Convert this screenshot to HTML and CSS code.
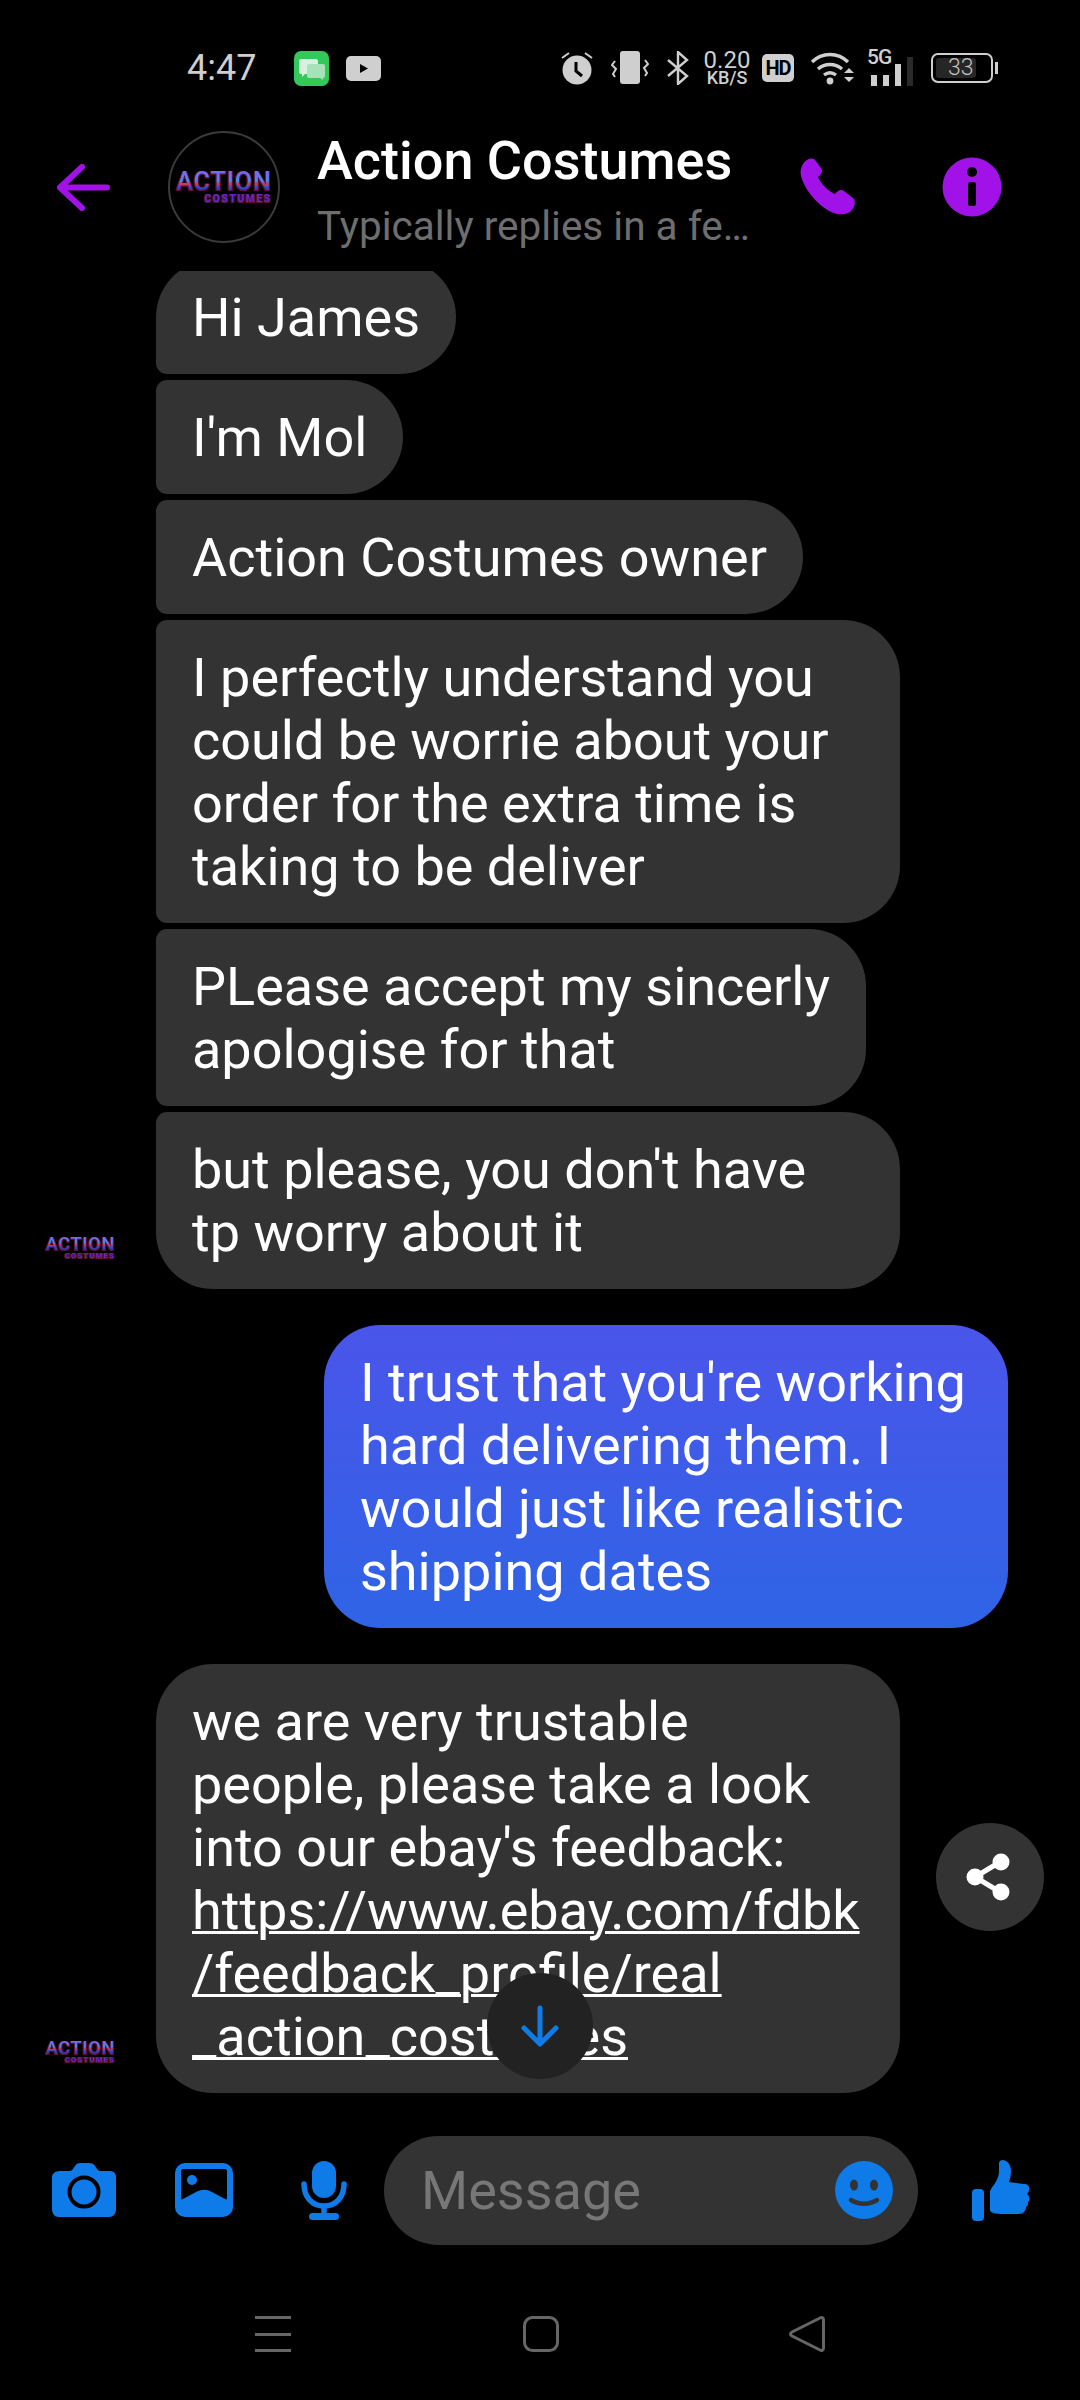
FILE: index.html
```html
<!DOCTYPE html>
<html lang="en">
<head>
<meta charset="UTF-8">
<meta name="viewport" content="width=device-width, initial-scale=1.0">
<title>Action Costumes</title>
<link rel="stylesheet" href="styles.css">
</head>
<body>

<div class="status-bar">
    <span class="clock">4:47</span>
    <svg class="app-icon" width="35" height="35" viewBox="0 0 35 35">
        <rect width="35" height="35" rx="7" fill="#34c759"/>
        <path d="M8 8h14a2 2 0 0 1 2 2v11a2 2 0 0 1-2 2H11l-3 3v-3H7a2 2 0 0 1-2-2V10a2 2 0 0 1 2-2z" fill="#d6f2de"/>
        <path d="M15 13h14a2 2 0 0 1 2 2v10a2 2 0 0 1-2 2v2l-3-2H15a2 2 0 0 1-2-2V15a2 2 0 0 1 2-2z" fill="#a8e2b8"/>
    </svg>
    <svg class="app-icon" width="35" height="25" viewBox="0 0 35 25">
        <rect width="35" height="25" rx="5" fill="#cfcfcf"/>
        <path d="M14 8l8 4.500-8 4.500z" fill="#000"/>
    </svg>

    <div class="status-right">
        <svg class="i-alarm" width="32" height="34" viewBox="0 0 32 34">
            <circle cx="16" cy="19" r="14.500" fill="#cfcfcf"/>
            <path d="M15 11v9l6 5" fill="none" stroke="#000" stroke-width="3"/>
            <path d="M1 7l7-5M31 7l-7-5" stroke="#cfcfcf" stroke-width="2"/>
        </svg>
        <svg class="i-vibrate" width="38" height="34" viewBox="0 0 38 34">
            <rect x="9" width="20" height="33" rx="3" fill="#cfcfcf"/>
            <path d="M4 10L1 14l4 4-3 5 2 3M34 9l3 4-4 4 3 5-2 3" fill="none" stroke="#cfcfcf" stroke-width="2"/>
        </svg>
        <svg class="i-bt" width="22" height="34" viewBox="0 0 22 34">
            <path d="M1 9l19 16-9 8V1l9 8L1 25" fill="none" stroke="#cfcfcf" stroke-width="2.400"/>
        </svg>
        <div class="speed"><span class="speed-num">0.20</span><span class="speed-unit">KB/S</span></div>
        <span class="hd">HD</span>
        <svg class="i-wifi" width="46" height="36" viewBox="0 0 46 36">
            <path d="M2 12c10-10 26-10 36 0M8 19c7-6 17-6 24 0M14 25c4-3 8-3 12 0" fill="none" stroke="#cfcfcf" stroke-width="3.400"/>
            <circle cx="20" cy="31" r="3.400" fill="#cfcfcf"/>
            <path d="M34 23l5-5 5 5zM34 27l5 5 5-5z" fill="#cfcfcf"/>
        </svg>
        <div class="signal">
            <span class="five-g">5G</span>
            <i class="bar b1"></i><i class="bar b2"></i><i class="bar b3"></i><i class="bar b4"></i>
        </div>
        <div class="battery"><span class="battery-fill">33</span></div>
        <i class="battery-nub"></i>
    </div>
</div>

<div class="header">
    <svg class="back" width="53" height="47" viewBox="0 0 53 47">
        <path d="M25 3L3 23.500l22 20.500M3 23.500h47" fill="none" stroke="#a112e8" stroke-width="6" stroke-linecap="round" stroke-linejoin="round"/>
    </svg>
    <div class="avatar-big">
        <div class="logo logo-big"><b>ACTION</b><em>COSTUMES</em></div>
    </div>
    <div class="header-text">
        <div class="name">Action Costumes</div>
        <div class="sub">Typically replies in a fe…</div>
    </div>
    <svg class="phone" width="58" height="58" viewBox="0 0 58 58">
        <path d="M3 6c3-5 9-7 12-4l6 8c2 3 1 6-3 9 3 7 10 14 17 17 3-4 6-5 9-3l9 7c3 3 2 8-1 12-3 4-9 5-15 4C22 52 5 34 1 18 0 13 1 9 3 6z" fill="#a112e8"/>
    </svg>
    <svg class="info" width="60" height="60" viewBox="0 0 60 60">
        <circle cx="30" cy="30" r="29.500" fill="#a112e8"/>
        <circle cx="30" cy="15" r="5" fill="#000"/>
        <rect x="26" y="25" width="8" height="24" rx="2.500" fill="#000"/>
    </svg>
</div>

<div class="thread">
    <div class="group">
        <div class="side"></div>
        <div class="bubbles">
            <div class="bubble first">Hi James</div>
            <div class="bubble">I'm Mol</div>
            <div class="bubble">Action Costumes owner</div>
            <div class="bubble wide">I perfectly understand you<br>could be worrie about your<br>order for the extra time is<br>taking to be deliver</div>
            <div class="bubble">PLease accept my sincerly<br>apologise for that</div>
            <div class="bubble wide last">but please, you don't have<br>tp worry about it</div>
        </div>
    </div>
    <div class="avatar-row first-avatar">
        <div class="logo logo-small"><b>ACTION</b><em>COSTUMES</em></div>
    </div>

    <div class="sent">I trust that you're working<br>hard delivering them. I<br>would just like realistic<br>shipping dates</div>

    <div class="group">
        <div class="side"></div>
        <div class="bubbles">
            <div class="bubble wide solo">we are very trustable<br>people, please take a look<br>into our ebay's feedback:<br><a class="link">https://www.ebay.com/fdbk<br>/feedback_profile/real<br>_action_costumes</a></div>
        </div>
        <div class="share">
            <svg width="44" height="48" viewBox="0 0 44 48">
                <path d="M34 9L9 24l25 15" fill="none" stroke="#fff" stroke-width="5"/>
                <circle cx="35" cy="9" r="8.500" fill="#fff"/>
                <circle cx="9" cy="24" r="8.500" fill="#fff"/>
                <circle cx="35" cy="39" r="8.500" fill="#fff"/>
            </svg>
        </div>
    </div>
    <div class="avatar-row second-avatar">
        <div class="logo logo-small"><b>ACTION</b><em>COSTUMES</em></div>
    </div>

    <div class="scroll-down">
        <svg width="38" height="42" viewBox="0 0 38 42">
            <path d="M19 3v35M3 23l16 16 16-16" fill="none" stroke="#0e7be8" stroke-width="5" stroke-linecap="round" stroke-linejoin="round"/>
        </svg>
    </div>
</div>

<div class="composer">
    <svg class="c-camera" width="64" height="54" viewBox="0 0 64 54">
        <path d="M8 8h9c3 0 4-2 6-5 1-2 3-3 5-3h9c3 0 5 1 6 3 2 3 3 5 6 5h9c4 0 6 3 6 6v32c0 5-3 8-7 8H7c-4 0-7-3-7-8V14c0-3 3-6 8-6z" fill="#0e7be8"/>
        <circle cx="32" cy="29" r="14.500" fill="#0e7be8" stroke="#000" stroke-width="4"/>
    </svg>
    <svg class="c-image" width="58" height="54" viewBox="0 0 58 54">
        <rect width="58" height="54" rx="10" fill="#0e7be8"/>
        <rect x="6" y="6" width="46" height="31" rx="2" fill="#000"/>
        <circle cx="17" cy="17" r="5" fill="#0e7be8"/>
        <path d="M6 37l15-8c6-3 10-3 16 0l15 8v6H6z" fill="#0e7be8"/>
    </svg>
    <svg class="c-mic" width="46" height="59" viewBox="0 0 46 59">
        <rect x="11" width="24" height="37" rx="12" fill="#0e7be8"/>
        <path d="M3 23c0 13 8 22 20 22s20-9 20-22M23 45v9" fill="none" stroke="#0e7be8" stroke-width="5.500" stroke-linecap="round"/>
        <rect x="8" y="52" width="30" height="7" rx="3.500" fill="#0e7be8"/>
    </svg>
    <div class="input">
        <span class="placeholder">Message</span>
        <svg width="58" height="58" viewBox="0 0 58 58">
            <circle cx="29" cy="29" r="29" fill="#0e7be8"/>
            <ellipse cx="19" cy="24" rx="4" ry="5.500" fill="#333"/>
            <ellipse cx="39" cy="24" rx="4" ry="5.500" fill="#333"/>
            <path d="M16 39c8 5 18 5 26 0" fill="none" stroke="#333" stroke-width="4.500" stroke-linecap="round"/>
        </svg>
    </div>
    <svg class="c-thumb" width="60" height="61" viewBox="0 0 60 61">
        <rect y="29" width="12" height="32" rx="4" fill="#0e7be8"/>
        <path d="M18 31c3-6 9-11 9-20V3c0-2 2-3 4-3 5 1 8 5 8 11 0 4-1 8-2 11l15 2c4 0 6 3 5 6 0 2-1 3-2 4 3 2 3 6 1 8 0 2 0 4-2 5 0 4-3 7-7 7H30c-5 0-12-1-12-4z" fill="#0e7be8"/>
    </svg>
</div>

<div class="nav-bar">
    <div class="nav-menu"><i></i><i></i><i></i></div>
    <svg class="nav-home" width="36" height="36" viewBox="0 0 36 36">
        <rect x="1.500" y="1.500" width="33" height="33" rx="8" fill="none" stroke="#666" stroke-width="3"/>
    </svg>
    <svg width="36" height="36" viewBox="0 0 36 36">
        <path d="M31 2c2-1 3.500 0 3.500 2v28c0 2-1.500 3-3.500 2L3 20c-2-1-2-3 0-4z" fill="none" stroke="#666" stroke-width="3"/>
    </svg>
</div>

</body>
</html>
```

FILE: styles.css
```css
html, body {
    margin: 0;
    padding: 0;
    width: 1080px;
    height: 2400px;
    overflow: hidden;
    background: #000;
}

body {
    display: flex;
    flex-direction: column;
    font-family: Roboto, sans-serif;
    color: #fff;
}

/* status bar */
.status-bar {
    height: 120px;
    display: flex;
    align-items: center;
    padding: 16px 0 0 187px;
    box-sizing: border-box;
    color: #cfcfcf;
    flex: none;
}

.clock {
    font-size: 36px;
    margin-right: 38px;
}

.app-icon {
    margin-right: 17px;
}

.status-right {
    margin-left: auto;
    margin-right: 82px;
    display: flex;
    align-items: center;
}

.i-alarm { margin-right: 18px; }
.i-vibrate { margin-right: 18px; }
.i-bt { margin-right: 13px; }

.speed {
    display: flex;
    flex-direction: column;
    align-items: center;
    width: 50px;
    margin-right: 10px;
}

.speed-num {
    font-size: 24px;
    line-height: 20px;
}

.speed-unit {
    font-size: 18px;
    line-height: 16px;
    font-weight: 500;
}

.hd {
    width: 32px;
    height: 28px;
    border-radius: 5px;
    background: #cfcfcf;
    color: #000;
    font-size: 20px;
    font-weight: 700;
    line-height: 28px;
    text-align: center;
    margin-right: 16px;
    letter-spacing: -1px;
}

.i-wifi { margin-right: 11px; }

.signal {
    position: relative;
    width: 47px;
    height: 36px;
    padding-left: 4px;
    box-sizing: border-box;
    display: flex;
    align-items: flex-end;
    gap: 6px;
    margin-right: 17px;
}

.five-g {
    position: absolute;
    top: -3px;
    left: 0;
    font-size: 21px;
    line-height: 20px;
    font-weight: 500;
    letter-spacing: -1px;
}

.bar {
    width: 6px;
    background: #cfcfcf;
}

.b1 { height: 11px; }
.b2 { height: 11px; }
.b3 { height: 22px; }
.b4 { height: 29px; background: #2a2a2a; }

.battery {
    width: 62px;
    height: 30px;
    box-sizing: border-box;
    border: 2px solid #cfcfcf;
    border-radius: 7px;
    padding: 3px;
    display: flex;
}

.battery-fill {
    width: 40px;
    padding-left: 12px;
    box-sizing: border-box;
    background: #262626;
    border-radius: 3px;
    font-size: 23px;
    line-height: 20px;
    color: #c4c4c4;
    font-weight: 300;
}

.battery-nub {
    width: 3px;
    height: 12px;
    background: #cfcfcf;
    margin-left: 2px;
}

/* conversation header */
.header {
    height: 151px;
    flex: none;
    display: flex;
    align-items: center;
    padding: 0 0 17px 57px;
    box-sizing: border-box;
}

.back { margin-right: 58px; }

.avatar-big {
    width: 112px;
    height: 112px;
    box-sizing: border-box;
    border: 2px solid #3a3a3a;
    border-radius: 50%;
    display: flex;
    align-items: center;
    justify-content: center;
    margin-right: 37px;
}

.header-text {
    width: 483px;
    padding-top: 9px;
}

.name {
    font-size: 54px;
    font-weight: 500;
    line-height: 62px;
}

.sub {
    font-size: 40.500px;
    line-height: 54px;
    color: #6e6e6e;
    margin-top: 7px;
}

.phone { margin-right: 84px; }

/* the little neon logo */
.logo {
    display: flex;
    flex-direction: column;
    align-items: flex-end;
    filter: drop-shadow(1px 0 0 #5e1030) drop-shadow(-1px 0 0 #5e1030) drop-shadow(0 1px 0 #5e1030);
}

.logo b,
.logo em {
    font-style: normal;
    font-weight: 700;
}

.logo b {
    font-weight: 500;
    background: linear-gradient(#6f6cf5 12%, #3f8ef0 46%, #c83a66 56%, #c83a66 60%, #3a4fd8 68%, #2f2aa8 90%);
    -webkit-background-clip: text;
    background-clip: text;
    color: transparent;
}

.logo em { color: #5a2bd8; }

.logo-big b {
    font-size: 25px;
    line-height: 24px;
    letter-spacing: 1px;
}

.logo-big em {
    font-size: 10px;
    line-height: 10px;
    letter-spacing: 1.800px;
}

.logo-small b {
    font-size: 18px;
    line-height: 17px;
    letter-spacing: 0.800px;
}

.logo-small em {
    font-size: 7.500px;
    line-height: 8px;
    letter-spacing: 1.300px;
}

/* thread */
.thread {
    position: relative;
    height: 1855px;
    flex: none;
    overflow: hidden;
    font-size: 54px;
    line-height: 63px;
}

.group {
    display: flex;
    align-items: flex-end;
}

.side {
    width: 156px;
    flex: none;
}

.bubbles {
    display: flex;
    flex-direction: column;
    align-items: flex-start;
    gap: 6px;
}

.bubble {
    background: #333;
    padding: 26px 36px 25px;
    border-radius: 11px 57px 57px 11px;
}

.bubble.wide {
    width: 744px;
    box-sizing: border-box;
}

.bubble.first {
    margin-top: -11px;
    border-top-left-radius: 57px;
}

.bubble.last {
    border-bottom-left-radius: 57px;
}

.bubble.solo {
    border-radius: 57px;
}

.sent {
    width: 684px;
    box-sizing: border-box;
    margin: 36px 72px 36px auto;
    padding: 26px 36px 25px;
    border-radius: 57px;
    background: linear-gradient(#4a55ea, #2f64e6);
}

.link {
    text-decoration: underline;
    text-decoration-thickness: 3px;
}

.avatar-row {
    position: absolute;
    left: 43px;
    width: 72px;
}

.first-avatar { top: 964px; }
.second-avatar { top: 1768px; }

.share {
    width: 108px;
    height: 108px;
    box-sizing: border-box;
    padding-right: 5px;
    border-radius: 50%;
    background: #333;
    display: flex;
    align-items: center;
    justify-content: center;
    margin-left: 36px;
    margin-bottom: 162px;
    flex: none;
}

.scroll-down {
    position: absolute;
    left: 487px;
    top: 1702px;
    width: 106px;
    height: 106px;
    border-radius: 50%;
    background: #222;
    display: flex;
    align-items: center;
    justify-content: center;
}

/* composer */
.composer {
    height: 128px;
    flex: none;
    display: flex;
    align-items: center;
    padding-left: 52px;
    box-sizing: border-box;
}

.c-camera { margin-right: 59px; }
.c-image { margin-right: 68px; }
.c-mic { margin-right: 37px; }
.c-thumb { margin-left: 54px; }

.input {
    width: 534px;
    height: 109px;
    border-radius: 55px;
    background: #333;
    display: flex;
    align-items: center;
    justify-content: space-between;
    padding: 0 25px 0 37px;
    box-sizing: border-box;
}

.placeholder {
    font-size: 54px;
    color: #777;
}

/* system nav */
.nav-bar {
    height: 146px;
    flex: none;
    display: flex;
    align-items: flex-start;
    padding: 62px 0 0 255px;
    box-sizing: border-box;
}

.nav-menu {
    width: 36px;
    height: 36px;
    margin-right: 232px;
    display: flex;
    flex-direction: column;
    justify-content: space-between;
}

.nav-menu i {
    display: block;
    height: 3px;
    background: #666;
}

.nav-home {
    margin-right: 230px;
}
```
